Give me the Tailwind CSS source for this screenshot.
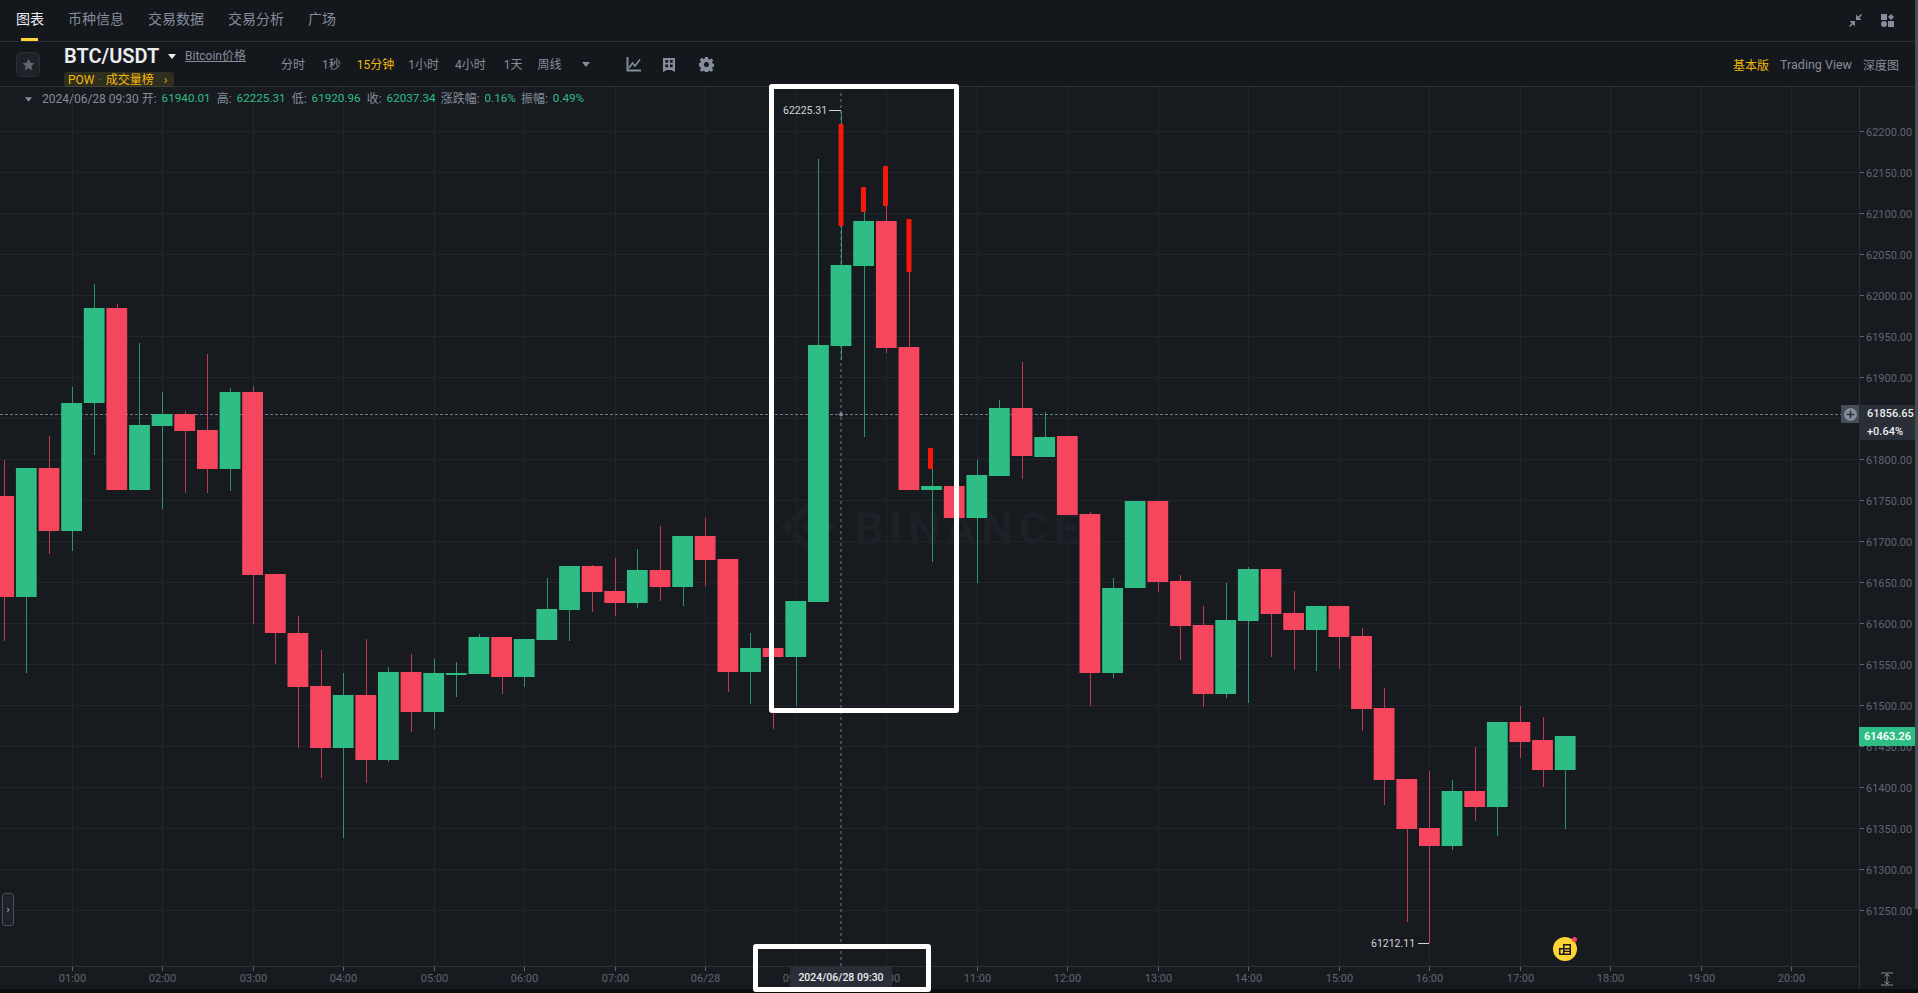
<!DOCTYPE html>
<html lang="zh-CN">
<head>
  <meta charset="UTF-8" />
  <title>BTC/USDT 图表</title>
  <script src="https://cdn.jsdelivr.net/npm/@tailwindcss/browser@4"></script>
</head>
<body class="bg-[#0b0e11] overflow-hidden">
<div class="relative w-[1918px] h-[993px] overflow-hidden font-[Roboto,'Noto_Sans_CJK_SC',sans-serif] text-[#848e9c]">

  <!-- top tabs -->
  <header class="h-[42px] bg-[#14171c] border-b border-[#2b2f36] flex items-center pl-4 pr-[24px] gap-6 text-sm pb-[4px]">
    <a class="relative text-[#eaecef]">图表<span class="absolute left-[5px] top-[29px] w-[17px] h-[3px] bg-[#fcd535]"></span></a>
    <a>币种信息</a>
    <a>交易数据</a>
    <a>交易分析</a>
    <a>广场</a>
    <div class="ml-auto flex items-center gap-[19px] mt-[4px]">
      <svg width="13" height="13" viewBox="0 0 12 12" fill="#848e9c"><path d="M6.500 5.500V.5l2 2L11 0l1 1-2.500 2.500 2 2ZM5.500 6.500v5l-2-2L1 12l-1-1 2.500-2.500-2-2Z"/></svg>
      <svg width="13" height="13" viewBox="0 0 13 13" fill="#848e9c"><rect width="6" height="6"/><path d="M10 0l3 3-3 3-3-3Z"/><circle cx="3" cy="10" r="3"/><rect x="7" y="7" width="6" height="6"/></svg>
    </div>
  </header>

  <!-- symbol and interval bar -->
  <div class="h-[45px] bg-[#14171c] border-b border-[#2b2f36] flex items-center pl-4 pr-[19px] text-xs">
    <button class="w-[24px] h-[25px] mt-[1px] rounded-md border border-[#2b2f36] bg-[#1e2329] flex items-center justify-center">
      <svg width="13" height="13" viewBox="0 0 24 24" fill="#5e6673"><path d="M12 1.500l3.300 7 7.700 1-5.600 5.300 1.400 7.700-6.800-3.800-6.800 3.800 1.400-7.700L1 9.500l7.700-1Z"/></svg>
    </button>
    <div class="ml-[24px] w-[217px] h-full relative">
      <div class="flex items-center h-[26px] mt-[1px]">
        <span class="text-[20px] leading-none font-semibold text-[#eaecef] w-[104px]">BTC/USDT</span>
        <svg width="8" height="5" viewBox="0 0 8 5" fill="#eaecef"><path d="M0 0h8L4 5Z"/></svg>
        <span class="ml-[9px] underline">Bitcoin价格</span>
      </div>
      <div class="inline-flex items-center h-[15px] w-[110px] mt-[3px] rounded-sm bg-[#fcd535]/12 text-[#f0b90b] px-[4px] leading-none gap-[5px]">
        <span>POW</span><span class="text-[#7a6a1e] -ml-[1px]">·</span><span class="-ml-[1px]">成交量榜</span><span class="ml-[5px]">›</span>
      </div>
    </div>
    <nav class="flex items-center mt-[1px]">
      <a>分时</a><a class="ml-[17px]">1秒</a><a class="ml-[16px] text-[#f0b90b]">15分钟</a><a class="ml-[14px]">1小时</a><a class="ml-[16px]">4小时</a><a class="ml-[18px]">1天</a><a class="ml-[15px]">周线</a>
      <svg class="ml-[20px]" width="8" height="5" viewBox="0 0 8 5" fill="#848e9c"><path d="M0 0h8L4 5Z"/></svg>
      <svg class="ml-[36px]" width="15" height="15" viewBox="0 0 15 15" fill="none" stroke="#848e9c" stroke-width="2"><path d="M1.500 0v13.500H15"/><path d="M3 11l3.500-5 2.500 3L14 2.500" stroke-width="1.600"/></svg>
      <svg class="ml-[22px]" width="12" height="14" viewBox="0 0 13 15" fill="#848e9c"><path fill-rule="evenodd" d="M0 0h13v15l-4-2H4l-4 2ZM2.500 2v3h3V2Zm5 0v3h3V2Zm-5 5v3h3V7Zm5 0v3h3V7Z"/></svg>
      <svg class="ml-[24px]" width="15" height="15" viewBox="0 0 24 24" fill="#848e9c"><path fill-rule="evenodd" d="M9.800 0h4.400l.7 3.300 2 .8 2.900-1.800 3 3-1.900 2.900.9 2 3.200.7v4.200l-3.200.7-.9 2 1.900 2.900-3 3-2.900-1.800-2 .8-.7 3.300H9.800l-.7-3.300-2-.8-2.900 1.800-3-3 1.900-2.900-.9-2L-1 14.100V9.900l3.200-.7.9-2L1.200 4.300l3-3 2.900 1.800 2-.8ZM12 8a4 4 0 1 0 0 8 4 4 0 0 0 0-8Z"/></svg>
    </nav>
    <div class="ml-auto flex items-center gap-[11px] mt-[3px]">
      <a class="text-[#f0b90b]">基本版</a><a class="text-[12.5px] text-[#848e9c]">Trading View</a><a>深度图</a>
    </div>
  </div>

  <!-- chart -->
  <div class="relative h-[902px] bg-[#171a1f]">
    <svg id="chart" class="absolute left-0 top-0" width="1918" height="902" viewBox="0 87 1918 902" font-family="Roboto, sans-serif"></svg>

    <!-- ohlc readout -->
    <div class="absolute left-[25px] top-[5px] flex items-center h-[14px] text-xs leading-none whitespace-nowrap">
      <svg width="7" height="5" viewBox="0 0 8 5" fill="#848e9c"><path d="M0 0h8L4 5Z"/></svg>
      <span class="ml-[10px]">2024/06/28 09:30 开:</span><span class="ml-[5px] text-[11.7px] text-[#2ebd85]">61940.01</span>
      <span class="ml-[6px]">高:</span><span class="ml-[5px] text-[11.7px] text-[#2ebd85]">62225.31</span>
      <span class="ml-[6px]">低:</span><span class="ml-[5px] text-[11.7px] text-[#2ebd85]">61920.96</span>
      <span class="ml-[6px]">收:</span><span class="ml-[5px] text-[11.7px] text-[#2ebd85]">62037.34</span>
      <span class="ml-[5px]">涨跌幅:</span><span class="ml-[5px] text-[11.7px] text-[#2ebd85]">0.16%</span>
      <span class="ml-[5px]">振幅:</span><span class="ml-[5px] text-[11.7px] text-[#2ebd85]">0.49%</span>
    </div>

    <!-- crosshair price tag -->
    <div class="absolute left-[1841px] top-[318px] w-[18px] h-[18px] bg-[#474c55] flex items-center justify-center">
      <svg width="13" height="13" viewBox="0 0 12 12"><circle cx="6" cy="6" r="6" fill="#848e9c"/><path d="M6 2.500v7M2.500 6h7" stroke="#2b2f36" stroke-width="1.500"/></svg>
    </div>
    <div class="absolute left-[1859px] top-[318px] w-[59px] h-[35px] bg-[#2a2e36] flex flex-col text-[11px] leading-[18px] font-medium text-[#eaecef] pl-[8px]">
      <span>61856.65</span><span>+0.64%</span>
    </div>

    <!-- last price tag -->
    <div class="absolute left-[1859px] top-[640px] w-[56px] h-[19px] bg-[#2ebd85] text-white text-[11px] leading-[19px] font-semibold text-right pr-[4px]">61463.26</div>

    <!-- crosshair date tag -->
    <div class="absolute left-[790px] top-[879px] w-[102px] h-[23px] bg-[#2a2e36] text-[#eaecef] text-[10.5px] leading-[23px] font-medium text-center">2024/06/28 09:30</div>

    <!-- drawer handle -->
    <div class="absolute left-[2px] top-[806px] w-[12px] h-[33px] rounded-[3px] border border-[#474d57] bg-[#1e2329] flex items-center justify-center text-[10px] leading-none text-[#b7bdc6]">›</div>

    <!-- assistant button -->
    <div class="absolute left-[1553px] top-[850px] w-[24px] h-[24px] rounded-full bg-[#fcd535] flex items-center justify-center">
      <svg width="12" height="11" viewBox="0 0 12 11" fill="#181a20"><path fill-rule="evenodd" d="M4 0h8v11H0V4h4Zm1.500 1.500V4h5V1.500ZM1.500 5.500v4H4v-4Zm4 0v1.200h5V5.500Zm0 2.500v1.500h5V8Z"/></svg>
      <span class="absolute right-[0px] top-[0px] w-[5px] h-[5px] rounded-full bg-[#f6465d]"></span>
    </div>
  </div>

  <!-- right edge strip -->
  <div class="absolute right-0 top-0 w-[3px] h-[909px] bg-[#474d57]"></div>

  <!-- annotation frames -->
  <div class="absolute left-[769px] top-[84px] w-[190px] h-[629px] border-[5px] border-white rounded-[3px]"></div>
  <div class="absolute left-[753px] top-[944px] w-[178px] h-[48px] border-[5px] border-white rounded-[3px]"></div>
</div>

<script>
  const GREEN = "#2ebd85", RED = "#f6465d", PILL = "#f5190c", GRID = "#22252b", LABEL = "#5e6673";

  // [up?, wick top, body top, body bottom, wick bottom] in page pixels
  const candles = [
    [0,460,496,597,641],[1,468,468,597,673],[0,436,468,531,554],[1,387,403,531,551],[1,284,308,403,455],
    [0,304,308,490,490],[1,343,425,490,490],[1,392,414,426,509],[0,411,414,431,493],[0,354,430,469,493],
    [1,388,392,469,491],[0,386,392,575,624],[0,574,574,633,664],[0,616,633,687,748],[0,650,686,748,778],
    [1,673,695,748,838],[0,639,695,760,783],[1,667,672,760,762],[0,654,672,712,732],[1,659,673,712,729],
    [1,662,673,675,697],[1,634,637,674,674],[0,637,637,677,694],[1,639,639,677,687],[1,578,609,640,640],
    [1,566,566,610,641],[0,565,566,592,612],[0,558,591,603,616],[1,549,570,603,608],[0,526,570,587,601],
    [1,536,536,587,606],[0,518,536,560,586],[0,559,559,672,692],[1,633,648,672,704],[0,648,648,657,729],
    [1,601,601,657,706],[1,159,345,602,602],[1,111,265,346,360],[1,212,221,266,437],[0,206,221,348,353],
    [0,272,347,490,490],[1,468,486,490,562],[0,467,486,518,637],[1,460,475,518,583],[1,400,408,476,476],
    [0,362,408,456,479],[1,412,437,457,457],[0,436,436,515,515],[0,512,514,673,706],[1,578,588,673,678],
    [1,501,501,588,588],[0,501,501,582,592],[0,575,581,626,660],[0,606,625,694,707],[1,583,620,694,698],
    [1,567,569,621,703],[0,569,569,614,657],[0,591,613,630,670],[1,606,606,630,671],[0,606,606,637,669],
    [0,628,636,709,731],[0,688,708,780,805],[0,779,779,829,922],[0,771,828,846,943],[1,780,791,846,850],
    [0,747,791,807,821],[1,722,722,807,836],[0,706,722,742,758],[0,717,740,770,787],[1,736,736,770,829]
  ];
  // red overlay strokes drawn on the reference: [x, top, bottom]
  const pills = [[841,124,226],[863.5,187,212],[885.5,166,206],[909,219,272],[930.5,448,469]];

  const times = ["01:00","02:00","03:00","04:00","05:00","06:00","07:00","06/28","09:00","10:00","11:00","12:00","13:00","14:00","15:00","16:00","17:00","18:00","19:00","20:00"];
  const prices = [];
  for (let i = 0; i < 20; i++) prices.push((62200 - i * 50).toFixed(2));

  let s = "";
  prices.forEach((p, i) => {
    const y = 131.5 + 41 * i;
    s += `<line x1="0" x2="1859" y1="${y}" y2="${y}" stroke="${GRID}"/>`;
    s += `<line x1="1859" x2="1864" y1="${y}" y2="${y}" stroke="${LABEL}"/>`;
    // 61850.00 sits fully under the crosshair tag
    if (p !== "61850.00") s += `<text x="1866" y="${y + 4}" font-size="11" fill="${LABEL}">${p}</text>`;
  });
  times.forEach((t, i) => {
    const x = Math.round(71.6 + 90.5 * i) + 0.5;
    s += `<line x1="${x}" x2="${x}" y1="87" y2="966" stroke="${GRID}"/>`;
    s += `<line x1="${x}" x2="${x}" y1="966" y2="971" stroke="${LABEL}"/>`;
    s += `<text x="${x}" y="982" font-size="11" text-anchor="middle" fill="${LABEL}">${t}</text>`;
  });
  s += `<line x1="0" x2="1859" y1="966.5" y2="966.5" stroke="#2b2f36"/>`;
  s += `<line x1="1859.5" x2="1859.5" y1="87" y2="989" stroke="#2b2f36"/>`;

  // watermark
  s += `<text x="855" y="544" font-size="45" font-weight="700" letter-spacing="5.5" fill="#1d2026">BINANCE</text>`;
  s += `<g fill="#1d2026"><path d="M808 520l7 7-7 7-7-7Z"/><path d="M788 520l7 7-7 7-7-7Z"/><path d="M828 520l7 7-7 7-7-7Z"/><path d="M808 501l17 17-5 5-12-12-12 12-5-5Z"/><path d="M808 553l-17-17 5-5 12 12 12-12 5 5Z"/></g>`;

  // crosshair sits behind the candles
  const crossH = `<line x1="0" x2="1841" y1="414.5" y2="414.5" stroke="#848e9c" stroke-dasharray="3 2"`;
  const crossV = `<line x1="841" x2="841" y1="93" y2="966" stroke="#848e9c" stroke-dasharray="3 3"`;
  s += crossH + ` stroke-opacity="0.8"/>` + crossV + ` stroke-opacity="0.8"/>`;

  candles.forEach((c, k) => {
    const x = 3.7 + 22.63 * k;
    const color = c[0] ? GREEN : RED;
    const wx = Math.round(x) + 0.5;
    s += `<line x1="${wx}" x2="${wx}" y1="${c[1]}" y2="${c[4]}" stroke="${color}" stroke-opacity="0.75"/>`;
    s += `<rect x="${(x - 10.4).toFixed(1)}" y="${c[2]}" width="20.8" height="${c[3] - c[2]}" fill="${color}"/>`;
  });
  s += crossH + ` stroke-opacity="0.15"/>`;
  s += `<circle cx="841" cy="414.5" r="2" fill="#848e9c"/>`;
  pills.forEach(p => {
    s += `<rect x="${p[0] - 2.5}" y="${p[1]}" width="5" height="${p[2] - p[1]}" rx="1" fill="${PILL}"/>`;
  });

  // high and low markers
  s += `<text x="783" y="114" font-size="10.5" fill="#d1d4dc">62225.31</text><line x1="829" x2="841" y1="110.5" y2="110.5" stroke="#d1d4dc"/>`;
  s += `<text x="1371" y="947" font-size="10.5" fill="#d1d4dc">61212.11</text><line x1="1418" x2="1429" y1="943.5" y2="943.5" stroke="#d1d4dc"/>`;

  // fit icon bottom right
  s += `<path d="M1881 973h12M1881 985h12M1887 974v10M1884.5 976.5l2.5-2.5 2.5 2.5M1884.5 981.5l2.5 2.5 2.5-2.5" fill="none" stroke="#848e9c"/>`;

  document.getElementById("chart").innerHTML = s;
</script>
</body>
</html>
